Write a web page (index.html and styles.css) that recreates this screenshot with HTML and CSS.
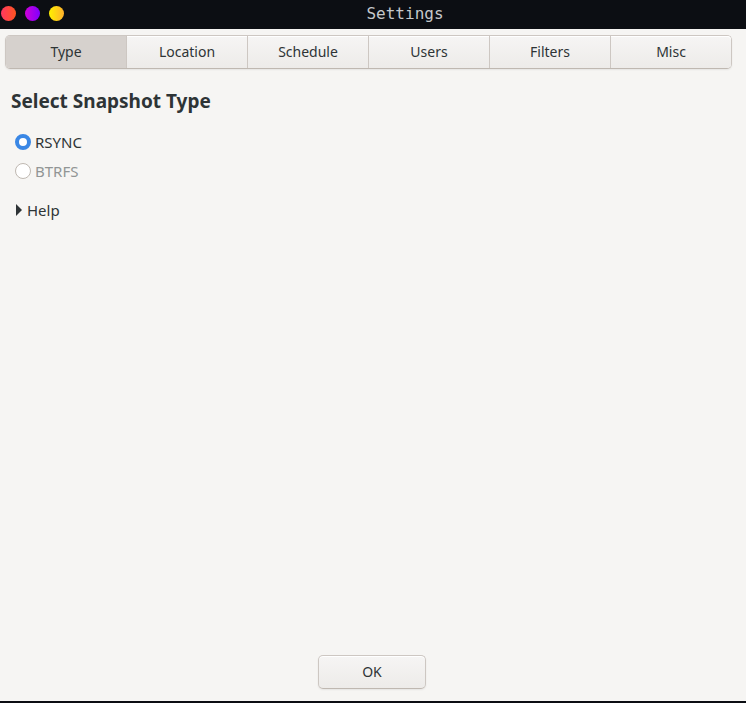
FILE: index.html
```html
<!DOCTYPE html>
<html lang="en">
<head>
<meta charset="utf-8">
<title>Settings</title>
<link rel="stylesheet" href="styles.css">
</head>
<body>
<header class="titlebar">
  <div class="window-controls">
    <button class="control control-close" type="button" aria-label="Close"></button>
    <button class="control control-minimize" type="button" aria-label="Minimize"></button>
    <button class="control control-maximize" type="button" aria-label="Maximize"></button>
  </div>
  <div class="window-title">Settings</div>
</header>
<main class="content">
  <nav class="tabs">
    <button class="tab tab-active" type="button">Type</button>
    <button class="tab" type="button">Location</button>
    <button class="tab" type="button">Schedule</button>
    <button class="tab" type="button">Users</button>
    <button class="tab" type="button">Filters</button>
    <button class="tab" type="button">Misc</button>
  </nav>
  <section class="panel">
    <h1 class="heading">Select Snapshot Type</h1>
    <div class="options">
      <label class="option" for="rsync"><input class="radio" type="radio" name="type" id="rsync" checked>RSYNC</label>
      <label class="option option-disabled" for="btrfs"><input class="radio" type="radio" name="type" id="btrfs" disabled>BTRFS</label>
    </div>
    <button class="expander" type="button" aria-expanded="false">
      <svg class="arrow" viewBox="0 0 6 12" aria-hidden="true"><path d="M0 0L6 6L0 12Z" fill="currentColor"/></svg>Help
    </button>
  </section>
  <footer class="actions">
    <button class="ok" type="button">OK</button>
  </footer>
</main>
</body>
</html>
```
FILE: styles.css
```css
* {
  box-sizing: border-box;
}

body {
  margin: 0;
  min-height: 100vh;
  display: flex;
  flex-direction: column;
  background: #f6f5f3;
  border-bottom: 2px solid #0b0d12;
  color: #2e3436;
  font: 14px/20px "Noto Sans", sans-serif;
}

button {
  font: inherit;
  color: inherit;
}

.titlebar {
  display: flex;
  align-items: center;
  height: 29px;
  padding: 0 0 2px 1px;
  background: #0c0e13;
}

.window-controls {
  display: flex;
  gap: 9px;
}

.control {
  width: 15px;
  height: 15px;
  padding: 0;
  border: 0;
  border-radius: 50%;
}

.control-close {
  background: linear-gradient(90deg, #ff3860, #ff5520);
}

.control-minimize {
  background: linear-gradient(90deg, #cf00d8, #8000ff);
}

.control-maximize {
  background: linear-gradient(90deg, #fff000, #ffb02c);
}

.window-title {
  flex: 1;
  text-align: center;
  color: #c5c8cb;
  font: 16px/20px "DejaVu Sans Mono", monospace;
}

.content {
  flex: 1;
  display: flex;
  flex-direction: column;
  padding: 6px 14px 12px 5px;
}

.tabs {
  display: flex;
  height: 34px;
  border: 1px solid #cdc7c2;
  border-bottom-color: #bfb8b1;
  border-radius: 5px;
  box-shadow: 0 1px 2px rgba(0, 0, 0, 0.07);
}

.tab {
  flex: 1;
  padding: 0;
  border: 0;
  border-left: 1px solid #cdc7c2;
  background: linear-gradient(#f6f5f4, #edebe9);
  box-shadow: inset 0 1px #fff;
}

.tab:first-child {
  border-left: 0;
  border-radius: 4px 0 0 4px;
}

.tab:last-child {
  border-radius: 0 4px 4px 0;
}

.tab-active {
  background: #d6d1cd;
  box-shadow: none;
}

.panel {
  padding: 18px 6px;
}

.heading {
  margin: 0;
  font-size: 19px;
  font-weight: 700;
  line-height: 28px;
}

.options {
  display: grid;
  justify-items: start;
  gap: 9px;
  padding: 17px 4px 0;
}

.option {
  display: flex;
  align-items: center;
  gap: 4px;
  font-size: 15px;
}

.option-disabled {
  color: #929595;
}

.radio {
  appearance: none;
  width: 16px;
  height: 16px;
  margin: 0;
  border: 1px solid #bfb8b1;
  border-radius: 50%;
  background: #fff;
}

.radio:checked {
  border: 4px solid #3a87e5;
}

.expander {
  display: flex;
  align-items: center;
  gap: 5px;
  margin-top: 19px;
  padding: 0 5px;
  border: 0;
  background: none;
  font-size: 15px;
}

.arrow {
  width: 6px;
  height: 12px;
}

.actions {
  display: flex;
  justify-content: center;
  margin-top: auto;
}

.ok {
  width: 108px;
  height: 34px;
  margin-left: 7px;
  border: 1px solid #cdc7c2;
  border-bottom-color: #bfb8b1;
  border-radius: 5px;
  background: linear-gradient(#f6f5f4, #edebe9);
  box-shadow: inset 0 1px #fff, 0 1px 2px rgba(0, 0, 0, 0.07);
}
```
